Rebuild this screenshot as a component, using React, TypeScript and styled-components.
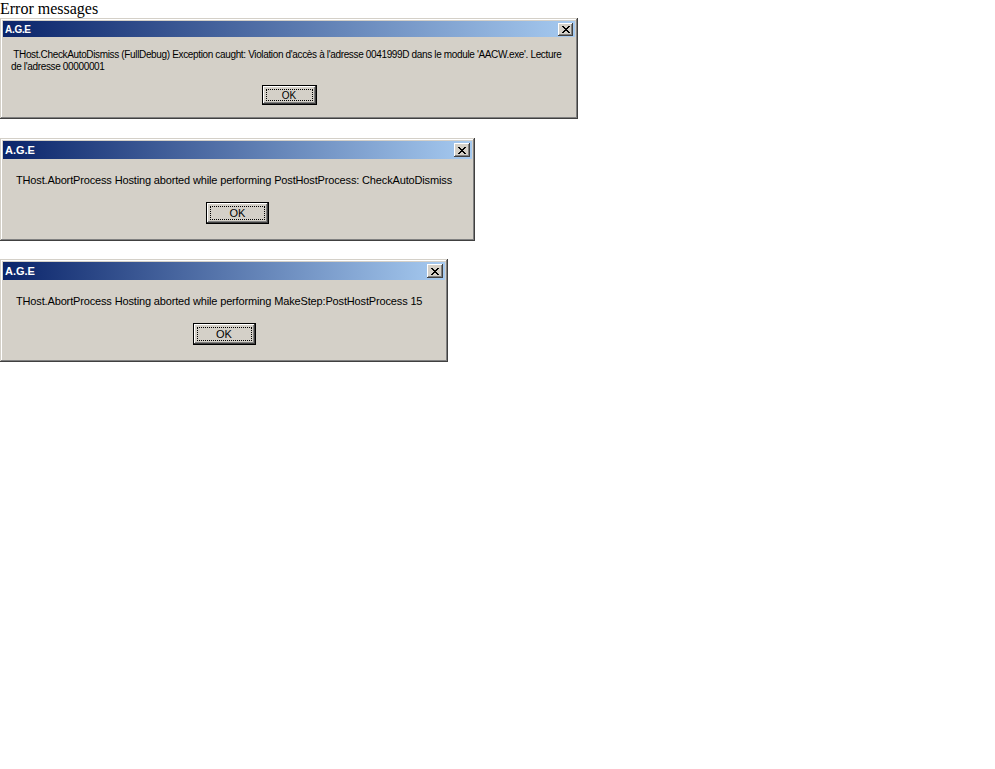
import React from "react";
import styled, { createGlobalStyle } from "styled-components";

const Global = createGlobalStyle`
  html, body { margin: 0; padding: 0; background: #ffffff; }
  body { font-family: "Liberation Serif", "Times New Roman", serif; font-size: 16px; color: #000; }
`;

const Page = styled.div`
  display: flex;
  flex-direction: column;
  align-items: flex-start;
`;

const Heading = styled.div`
  font-family: "Liberation Serif", "Times New Roman", serif;
  font-size: 16px;
  line-height: 18px;
  height: 18px;
`;

const List = styled.div`
  display: flex;
  flex-direction: column;
  align-items: flex-start;
`;

const Window = styled.div<{ $w: number; $gap: number }>`
  width: ${(p) => p.$w}px;
  margin-top: ${(p) => p.$gap}px;
  box-sizing: border-box;
  background: #d4d0c8;
  padding: 3px;
  box-shadow: inset -1px -1px 0 #404040, inset 1px 1px 0 #d4d0c8,
    inset -2px -2px 0 #808080, inset 2px 2px 0 #ffffff;
  font-family: Tahoma, "Liberation Sans", Arial, sans-serif;
`;

const TitleBar = styled.div<{ $small?: boolean }>`
  height: ${(p) => (p.$small ? 16 : 18)}px;
  display: flex;
  align-items: center;
  justify-content: space-between;
  padding: 0 2px 0 2px;
  background: linear-gradient(to right, #0a246a, #a6caf0);
`;

const Title = styled.span<{ $small?: boolean }>`
  color: #ffffff;
  font-weight: bold;
  font-size: ${(p) => (p.$small ? 10 : 11)}px;
  letter-spacing: ${(p) => (p.$small ? -0.3 : 0)}px;
`;

const CloseBtn = styled.div<{ $small?: boolean }>`
  width: ${(p) => (p.$small ? 15 : 16)}px;
  height: ${(p) => (p.$small ? 13 : 14)}px;
  box-sizing: border-box;
  background: #d4d0c8;
  display: flex;
  align-items: center;
  justify-content: center;
  box-shadow: inset -1px -1px 0 #404040, inset 1px 1px 0 #ffffff,
    inset -2px -2px 0 #808080;
`;

const Body = styled.div<{ $small?: boolean }>`
  display: flex;
  flex-direction: column;
  padding: ${(p) => (p.$small ? "12px 8px 11px" : "15px 13px 14px")};
`;

const Message = styled.div<{ $small?: boolean }>`
  font-size: ${(p) => (p.$small ? 10 : 11)}px;
  line-height: ${(p) => (p.$small ? 12 : 13)}px;
  letter-spacing: ${(p) => (p.$small ? -0.35 : -0.15)}px;
  color: #000;
  white-space: pre;
`;

const ButtonRow = styled.div<{ $small?: boolean }>`
  display: flex;
  justify-content: center;
  margin-top: ${(p) => (p.$small ? 12 : 15)}px;
`;

const Button = styled.div<{ $small?: boolean }>`
  width: ${(p) => (p.$small ? 55 : 63)}px;
  height: ${(p) => (p.$small ? 20 : 22)}px;
  box-sizing: border-box;
  border: 1px solid #000;
  background: #d4d0c8;
  box-shadow: inset -1px -1px 0 #404040, inset 1px 1px 0 #ffffff,
    inset -2px -2px 0 #808080;
  padding: 3px;
  display: flex;
`;

const Focus = styled.div<{ $small?: boolean }>`
  flex: 1;
  border: 1px dotted #000;
  display: flex;
  align-items: center;
  justify-content: center;
  font-size: ${(p) => (p.$small ? 10 : 11)}px;
  color: #000;
`;

const XIcon = ({ size }: { size: number }) => (
  <svg width={size} height={size - 1} viewBox="0 0 8 7" shapeRendering="crispEdges">
    <path
      d="M0 0h2v1h-2zM6 0h2v1h-2zM1 1h2v1h-2zM5 1h2v1h-2zM2 2h4v1h-4zM3 3h2v1h-2zM2 4h4v1h-4zM1 5h2v1h-2zM5 5h2v1h-2zM0 6h2v1h-2zM6 6h2v1h-2z"
      fill="#000"
    />
  </svg>
);

type DialogProps = { width: number; text: string; small?: boolean; gap: number };

const Dialog = ({ width, text, small, gap }: DialogProps) => (
  <Window $w={width} $gap={gap}>
    <TitleBar $small={small}>
      <Title $small={small}>A.G.E</Title>
      <CloseBtn $small={small}>
        <XIcon size={8} />
      </CloseBtn>
    </TitleBar>
    <Body $small={small}>
      <Message $small={small}>{text}</Message>
      <ButtonRow $small={small}>
        <Button $small={small}>
          <Focus $small={small}>OK</Focus>
        </Button>
      </ButtonRow>
    </Body>
  </Window>
);

export default function App() {
  return (
    <Page>
      <Global />
      <Heading>Error messages</Heading>
      <List>
        <Dialog
          width={578}
          gap={0}
          small
          text={
            " THost.CheckAutoDismiss (FullDebug) Exception caught: Violation d'accès à l'adresse 0041999D dans le module 'AACW.exe'. Lecture\nde l'adresse 00000001"
          }
        />
        <Dialog
          width={475}
          gap={19}
          text="THost.AbortProcess Hosting aborted while performing PostHostProcess: CheckAutoDismiss"
        />
        <Dialog
          width={448}
          gap={18}
          text="THost.AbortProcess Hosting aborted while performing MakeStep:PostHostProcess 15"
        />
      </List>
    </Page>
  );
}
